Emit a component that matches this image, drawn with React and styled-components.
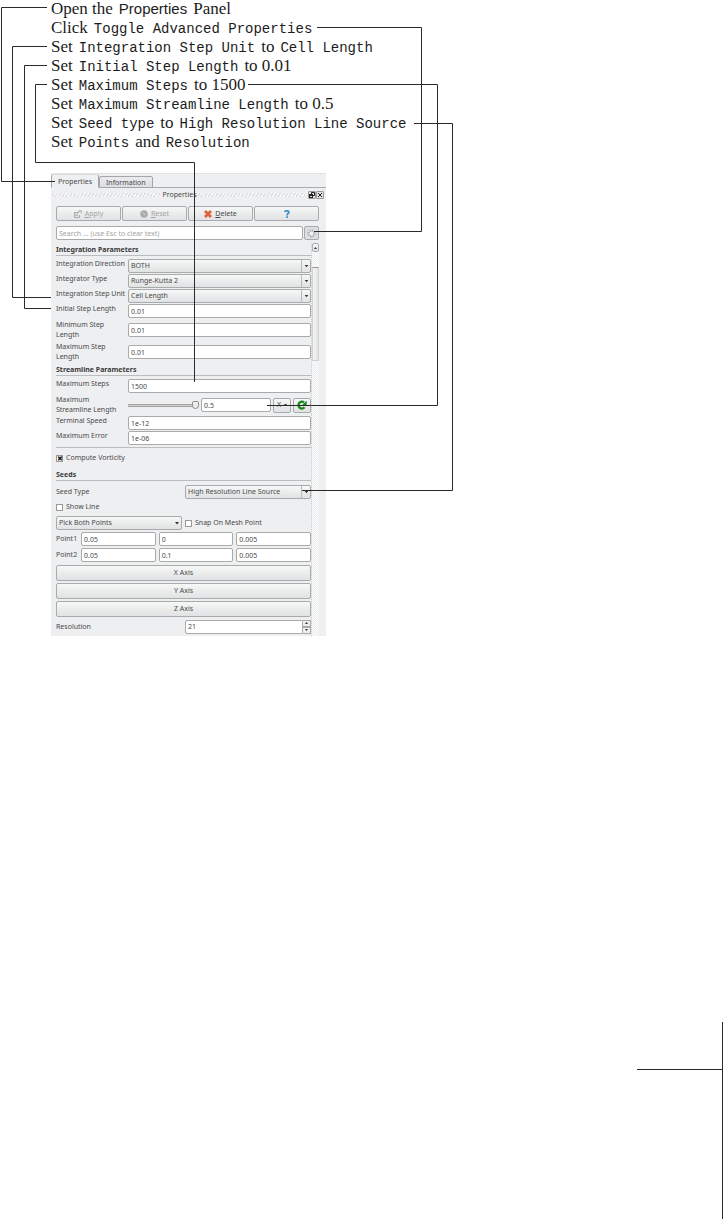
import React, { useState } from 'react';
import styled, { createGlobalStyle, css } from 'styled-components';

const GlobalStyle = createGlobalStyle`
  * {
    box-sizing: border-box;
  }
  body {
    margin: 0;
    background: #fff;
  }
  button, input, select {
    margin: 0;
    font: inherit;
    color: inherit;
  }
`;

const Page = styled.main`
  min-height: 100vh;
  display: flex;
  flex-direction: column;
  overflow-x: hidden;
`;

const Figure = styled.section`
  position: relative;
  padding-left: 51px;
`;

const Steps = styled.ol`
  list-style: none;
  margin: -1px 0 22px;
  padding: 0;
  color: #1c1c1c;
  font-family: 'Liberation Serif', serif;
  font-size: 17px;
  line-height: 19px;
`;

const Step = styled.li`
  display: flex;
  gap: 6px;
  height: 19px;
  align-items: baseline;
  white-space: nowrap;
`;

const Code = styled.code`
  font-family: 'Liberation Mono', monospace;
  font-size: 14px;
`;

const Sans = styled.span`
  font-family: 'Liberation Sans', sans-serif;
  font-size: 15px;
`;

const Connectors = styled.svg`
  position: absolute;
  top: 0;
  left: 0;
  fill: none;
  stroke: #2a2a2a;
  pointer-events: none;
`;

const PageRule = styled.svg`
  margin-top: auto;
  align-self: flex-end;
  fill: none;
  stroke: #2a2a2a;
`;

const Panel = styled.div`
  max-width: 275px;
  background: #eeeff1;
  color: #4a4a4a;
  font-family: 'Noto Sans', sans-serif;
  font-size: 7px;
  line-height: 10px;
`;

const TabBar = styled.div`
  display: flex;
  align-items: flex-end;
  height: 15px;
  border-top: 1px solid #e2e3e5;
  border-bottom: 1px solid #a9abad;
`;

const Tab = styled.button`
  height: ${({ $active }) => ($active ? 14 : 12)}px;
  margin-bottom: -1px;
  padding: 0 6px;
  border: 1px solid #a4a6a8;
  border-top-color: ${({ $active }) => ($active ? '#dcdddf' : '#a4a6a8')};
  border-bottom-color: ${({ $active }) => ($active ? '#eeeff1' : '#a4a6a8')};
  border-radius: 2px 2px 0 0;
  background: ${({ $active }) => ($active ? '#eeeff1' : 'linear-gradient(#ececee, #dcdee0)')};
  line-height: 9px;
`;

const DockTitle = styled.div`
  display: flex;
  align-items: center;
  height: 13px;
  padding-right: 2px;
`;

const Hatch = styled.span`
  flex: 1;
  height: 4px;
  margin: 0 3px 0 1px;
  background: repeating-linear-gradient(125deg, #fafafa 0 1px, #dcdddf 1px 2px, #eeeff1 2px 3px);
`;

const DockButton = styled.button`
  display: flex;
  width: 8px;
  height: 8px;
  padding: 0;
  border: 1px solid #999;
  border-radius: 1px;
  background: #e2e2e2;
`;

const raised = css`
  border: 1px solid #a8aaac;
  border-radius: 2px;
  background: linear-gradient(#f6f7f7, #e0e2e3);
`;

const field = css`
  width: 100%;
  min-width: 0;
  height: 14px;
  padding: 0 2px;
  border: 1px solid #a8aaac;
  border-radius: 2px;
  background: #fff;
  line-height: 10px;
`;

const Actions = styled.div`
  display: grid;
  grid-template-columns: repeat(4, 1fr);
  gap: 1px;
  padding: 5px 7px 5px 5px;
`;

const ActionButton = styled.button`
  ${raised}
  display: flex;
  align-items: center;
  justify-content: center;
  gap: 3px;
  height: 15px;
  padding: 0;

  &:disabled {
    color: #a4a5a6;
  }
`;

const SearchRow = styled.div`
  display: flex;
  gap: 1px;
  padding: 0 7px 3px 5px;
`;

const SearchInput = styled.input`
  ${field}
  &::placeholder {
    color: #a3a3a3;
    opacity: 1;
  }
`;

const AdvancedButton = styled.button`
  ${raised}
  flex: none;
  display: flex;
  align-items: center;
  justify-content: center;
  width: 15px;
  height: 14px;
  padding: 0;
  background: #dcdee0;
`;

const Body = styled.div`
  display: flex;
  padding: 0 7px 0 5px;
`;

const Form = styled.form`
  flex: 1;
  min-width: 0;
  padding-bottom: 2px;
`;

const Heading = styled.h2`
  height: 13px;
  margin: 0 0 3px;
  padding-top: 2px;
  border-bottom: 1px solid #bbbdbf;
  color: #3a3a3a;
  font-size: 7px;
  font-weight: 700;
  line-height: 10px;
`;

const Row = styled.div`
  display: grid;
  grid-template-columns: ${({ $wide }) => ($wide ? '129px 1fr' : '72px 1fr')};
  align-items: ${({ $tall, $wide }) => ($tall || $wide ? 'center' : 'start')};
  height: ${({ $tall }) => ($tall ? 22 : 15)}px;
`;

const Label = styled.label`
  white-space: pre;
`;

const TextInput = styled.input`
  ${field}
`;

const SelectBox = styled.span`
  display: grid;
  align-items: center;

  select {
    ${field}
    ${raised}
    grid-area: 1 / 1;
    appearance: none;
  }
`;

const Arrow = styled.svg`
  grid-area: 1 / 1;
  justify-self: end;
  width: 10px;
  height: 12px;
  border-left: ${({ $plain }) => ($plain ? 'none' : '1px solid #b8babc')};
  fill: #333;
  pointer-events: none;
`;

const SliderRow = styled.div`
  display: grid;
  grid-template-columns: 71px 1fr 18px 18px;
  gap: 2px;
  align-items: center;
`;

const Slider = styled.input`
  width: 100%;
  height: 10px;
  appearance: none;
  background: transparent;

  &::-webkit-slider-runnable-track {
    height: 3px;
    border: 1px solid #a4a4a4;
    border-width: 1px 0;
    background: #d0d0d0;
  }
  &::-webkit-slider-thumb {
    appearance: none;
    width: 7px;
    height: 8px;
    margin-top: -4px;
    border: 1px solid #888;
    border-radius: 2px 2px 4px 4px;
    background: #eee;
  }
`;

const SmallButton = styled.button`
  ${raised}
  display: flex;
  align-items: center;
  justify-content: center;
  gap: 3px;
  height: 15px;
  padding: 0;
`;

const Divider = styled.hr`
  height: 1px;
  margin: 1px 0 0;
  border: 0;
  background: #bbbdbf;
`;

const CheckLabel = styled.label`
  display: flex;
  align-items: center;
  gap: 3px;
  height: ${({ $height }) => $height}px;
`;

const CheckBox = styled.input`
  appearance: none;
  display: grid;
  place-items: center;
  width: 7px;
  height: 7px;
  border: 1px solid #999;
  background: #fff;

  &:checked::before {
    content: '✖';
    color: #222;
    font-size: 7px;
    line-height: 5px;
  }
`;

const PickRow = styled.div`
  display: grid;
  grid-template-columns: 126px 1fr;
  gap: 3px;
  align-items: center;
  height: 16px;
`;

const PointRow = styled.fieldset`
  display: grid;
  grid-template-columns: 22px repeat(3, 1fr);
  gap: 3px;
  align-items: center;
  height: 16px;
  margin: 0;
  padding: 0;
  border: 0;
`;

const AxisButtons = styled.div`
  display: grid;
  gap: 2px;
  padding: 2px 0;
`;

const AxisButton = styled.button`
  ${raised}
  height: 16px;
  padding: 0;
`;

const Spin = styled.div`
  display: flex;

  input {
    ${field}
    border-radius: 2px 0 0 2px;
    appearance: textfield;
  }
  input::-webkit-inner-spin-button {
    display: none;
  }
`;

const SpinButtons = styled.div`
  display: grid;
  width: 9px;

  button {
    display: grid;
    place-items: center;
    height: 7px;
    padding: 0;
    border: 1px solid #a8aaac;
    border-left: 0;
    background: #eee;
  }
`;

const ScrollBar = styled.div`
  width: 8px;
  border-left: 1px dotted #ccc;
  background: repeating-conic-gradient(#fafafa 0 25%, #eeeff0 0 50%) 0 0 / 2px 2px;
`;

const ScrollButton = styled.button`
  ${raised}
  display: grid;
  place-items: center;
  width: 100%;
  height: 9px;
  padding: 0;
`;

const Thumb = styled.div`
  display: grid;
  place-items: center;
  height: 94px;
  margin-top: 15px;
  border: 1px solid #d0d2d4;
  border-top-color: #999;
  background: linear-gradient(90deg, #f6f6f6, #e2e3e4);
`;

const Grip = styled.span`
  width: 6px;
  height: 12px;
  background: radial-gradient(#b4b6b8 40%, transparent 50%) 0 0 / 2px 2px;
`;

const lines = [
  'M47 7.5H1.5V181.5H55',
  'M47 46.5H12.5V297.5H51',
  'M47 65.5H24.5V308.5H51',
  'M47 84.5H35.5V162.5H194.5V382',
  'M317 27.5H421.5V231.5H314',
  'M248 84.5H437.5V405.5H267',
  'M414 123.5H452.5V490.5H302',
];

const points = [
  { name: 'Point1', values: ['0.05', '0', '0.005'] },
  { name: 'Point2', values: ['0.05', '0.1', '0.005'] },
];

const Triangle = ({ up }) => (
  <svg width="3" height="2" viewBox="0 0 3 2" fill="#333">
    <path d={up ? 'M0 2L1.5 0L3 2Z' : 'M0 0L1.5 2L3 0Z'} />
  </svg>
);

const Select = ({ id, options, plain, ...rest }) => (
  <SelectBox>
    <select id={id} {...rest}>
      {options.map((option) => (
        <option key={option}>{option}</option>
      ))}
    </select>
    <Arrow $plain={plain} viewBox="0 0 10 12">
      <path d="M3 5H7L5 7.5Z" />
    </Arrow>
  </SelectBox>
);

const SelectRow = ({ id, label, options, wide }) => (
  <Row $wide={wide}>
    <Label htmlFor={id}>{label}</Label>
    <Select id={id} options={options} />
  </Row>
);

const TextRow = ({ id, label, value, tall }) => (
  <Row $tall={tall}>
    <Label htmlFor={id}>{label}</Label>
    <TextInput id={id} defaultValue={value} />
  </Row>
);

const PropertiesPanel = () => {
  const [tab, setTab] = useState('Properties');
  const [resolution, setResolution] = useState(21);

  return (
    <Panel>
      <TabBar role="tablist">
        {['Properties', 'Information'].map((name) => (
          <Tab key={name} role="tab" aria-selected={tab === name} $active={tab === name} onClick={() => setTab(name)}>
            {name}
          </Tab>
        ))}
      </TabBar>
      <DockTitle>
        <Hatch />
        Properties
        <Hatch />
        <DockButton aria-label="Float">
          <svg width="6" height="6" viewBox="0 0 6 6" fill="none" stroke="#222">
            <path d="M2.5 2V.5H5.5V3.5H4" />
            <path d="M0 2H4V6H0Z" fill="#222" stroke="none" />
            <path d="M1 4H3V5H1Z" fill="#ddd" stroke="none" />
          </svg>
        </DockButton>
        <DockButton aria-label="Close">
          <svg width="6" height="6" viewBox="0 0 6 6" stroke="#222">
            <path d="M1 1L5 5M5 1L1 5" />
          </svg>
        </DockButton>
      </DockTitle>

      <Actions>
        <ActionButton disabled>
          <svg width="8" height="8" viewBox="0 0 8 8" fill="none" stroke="#aaa">
            <path d="M.5 2.5H4M.5 2V7.5H5.5V5M2 4V6L4 5" />
            <path d="M3 4L6 1M4.5 .8H7.3V3.5" />
          </svg>
          <span><u>A</u>pply</span>
        </ActionButton>
        <ActionButton disabled>
          <svg width="8" height="8" viewBox="0 0 8 8">
            <circle cx="4" cy="4" r="3.8" fill="#aaa" />
            <path d="M2 2.2L4.5 3.5L4 5.5" fill="none" stroke="#ccc" />
          </svg>
          <span><u>R</u>eset</span>
        </ActionButton>
        <ActionButton>
          <svg width="8" height="8" viewBox="0 0 8 8" stroke="#e0603c" strokeWidth="2.8">
            <path d="M1 1L7 7M7 1L1 7" />
          </svg>
          <span><u>D</u>elete</span>
        </ActionButton>
        <ActionButton aria-label="Help">
          <svg width="6" height="8" viewBox="0 0 6 8" fill="none" stroke="#3a92c8" strokeWidth="1.8">
            <path d="M.8 2C1 .5 5 .4 4.9 2.3C4.8 3.7 3 3.5 3 5.4M3 6.2V8" />
          </svg>
        </ActionButton>
      </Actions>

      <SearchRow>
        <SearchInput aria-label="Search" placeholder="Search ... (use Esc to clear text)" />
        <AdvancedButton aria-label="Toggle advanced properties">
          <svg width="9" height="9" viewBox="0 0 9 9" fill="none" stroke="#8c969e">
            <circle cx="4.5" cy="4.5" r="2.5" fill="#eef2f5" stroke="#b5bdc4" />
            <circle cx="4.5" cy="4.5" r="3.6" strokeDasharray="1.4 1.4" />
          </svg>
        </AdvancedButton>
      </SearchRow>

      <Body>
        <Form onSubmit={(e) => e.preventDefault()}>
          <Heading>Integration Parameters</Heading>
          <SelectRow id="direction" label="Integration Direction" options={['BOTH']} />
          <SelectRow id="integrator" label="Integrator Type" options={['Runge-Kutta 2']} />
          <SelectRow id="unit" label="Integration Step Unit" options={['Cell Length']} />
          <TextRow id="initial" label="Initial Step Length" value="0.01" />
          <TextRow id="minimum" label={'Minimum Step\nLength'} value="0.01" tall />
          <TextRow id="maximum" label={'Maximum Step\nLength'} value="0.01" tall />

          <Heading>Streamline Parameters</Heading>
          <TextRow id="steps" label="Maximum Steps" value="1500" />
          <Row $tall>
            <Label htmlFor="length">{'Maximum\nStreamline Length'}</Label>
            <SliderRow>
              <Slider type="range" aria-label="Streamline length" defaultValue="100" />
              <TextInput id="length" defaultValue="0.5" />
              <SmallButton type="button">
                X <Triangle />
              </SmallButton>
              <SmallButton type="button" aria-label="Reset length">
                <svg width="10" height="10" viewBox="0 0 10 10" fill="none" stroke="#168a1c" strokeWidth="2.4">
                  <path d="M7.5 7.3A3.4 3.4 0 1 1 7 2.4" />
                  <path d="M4.8 5.2H9.6V.8Z" fill="#168a1c" stroke="none" />
                </svg>
              </SmallButton>
            </SliderRow>
          </Row>
          <TextRow id="speed" label="Terminal Speed" value="1e-12" />
          <TextRow id="error" label="Maximum Error" value="1e-06" />
          <Divider />
          <CheckLabel $height={20}>
            <CheckBox type="checkbox" defaultChecked />
            Compute Vorticity
          </CheckLabel>

          <Heading>Seeds</Heading>
          <SelectRow id="seed" label="Seed Type" options={['High Resolution Line Source']} wide />
          <CheckLabel $height={16}>
            <CheckBox type="checkbox" />
            Show Line
          </CheckLabel>
          <PickRow>
            <Select aria-label="Pick points" options={['Pick Both Points']} plain />
            <CheckLabel $height={14}>
              <CheckBox type="checkbox" />
              Snap On Mesh Point
            </CheckLabel>
          </PickRow>
          {points.map(({ name, values }) => (
            <PointRow key={name} aria-label={name}>
              <Label htmlFor={`${name}-0`}>{name}</Label>
              {values.map((value, i) => (
                <TextInput key={i} id={`${name}-${i}`} aria-label={`${name} ${'XYZ'[i]}`} defaultValue={value} />
              ))}
            </PointRow>
          ))}
          <AxisButtons>
            {['X', 'Y', 'Z'].map((axis) => (
              <AxisButton key={axis} type="button">{axis} Axis</AxisButton>
            ))}
          </AxisButtons>
          <Row $wide>
            <Label htmlFor="resolution">Resolution</Label>
            <Spin>
              <input
                id="resolution"
                type="number"
                value={resolution}
                onChange={(e) => setResolution(Number(e.target.value))}
              />
              <SpinButtons>
                <button type="button" aria-label="Increase" onClick={() => setResolution(resolution + 1)}>
                  <Triangle up />
                </button>
                <button type="button" aria-label="Decrease" onClick={() => setResolution(resolution - 1)}>
                  <Triangle />
                </button>
              </SpinButtons>
            </Spin>
          </Row>
        </Form>
        <ScrollBar>
          <ScrollButton aria-label="Scroll up">
            <Triangle up />
          </ScrollButton>
          <Thumb>
            <Grip />
          </Thumb>
        </ScrollBar>
      </Body>
    </Panel>
  );
};

const App = () => (
  <Page>
    <GlobalStyle />
    <Figure>
      <Steps>
        <Step>Open the <Sans>Properties</Sans> Panel</Step>
        <Step>Click <Code>Toggle Advanced Properties</Code></Step>
        <Step>Set <Code>Integration Step Unit</Code> to <Code>Cell Length</Code></Step>
        <Step>Set <Code>Initial Step Length</Code> to 0.01</Step>
        <Step>Set <Code>Maximum Steps</Code> to 1500</Step>
        <Step>Set <Code>Maximum Streamline Length</Code> to 0.5</Step>
        <Step>Set <Code>Seed type</Code> to <Code>High Resolution Line Source</Code></Step>
        <Step>Set <Code>Points</Code> and <Code>Resolution</Code></Step>
      </Steps>
      <PropertiesPanel />
      <Connectors width="460" height="500" aria-hidden="true">
        {lines.map((d) => (
          <path key={d} d={d} />
        ))}
      </Connectors>
    </Figure>
    <PageRule width="86" height="197" aria-hidden="true">
      <path d="M0 47.5H85.5M85.5 0V197" />
    </PageRule>
  </Page>
);

export default App;
